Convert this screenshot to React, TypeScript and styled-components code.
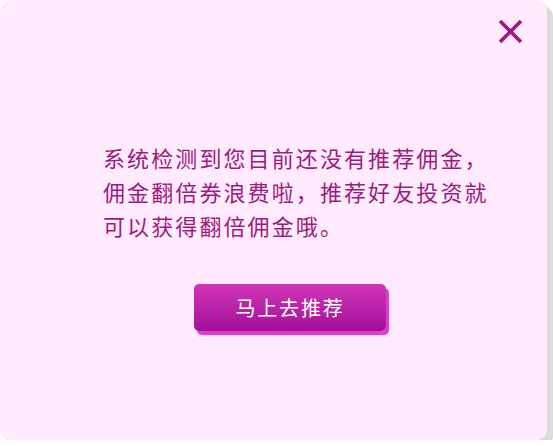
import React from "react";
import styled, { createGlobalStyle } from "styled-components";

const Global = createGlobalStyle`
  html, body { margin: 0; padding: 0; background: #ffffff; }
  body { font-family: "Noto Sans CJK SC", "Noto Sans", sans-serif; }
`;

const Panel = styled.div`
  position: relative;
  box-sizing: border-box;
  width: 547px;
  height: 440px;
  background: #ffebfd;
  border-radius: 10px;
  box-shadow: 6px 6px 0 #dcdcdc;
  padding: 140px 0 0 103px;
  display: flex;
  flex-direction: column;
  align-items: flex-start;
`;

const Close = styled.button`
  position: absolute;
  top: 18px;
  right: 23px;
  width: 27px;
  height: 27px;
  padding: 0;
  border: none;
  background: transparent;
  cursor: pointer;
  display: flex;
  align-items: center;
  justify-content: center;
`;

const Message = styled.p`
  margin: 0;
  font-size: 22px;
  line-height: 34px;
  letter-spacing: 2.1px;
  color: #9d1b7f;
  white-space: pre;
`;

const ActionButton = styled.button`
  margin: 42px 0 0 91px;
  width: 192px;
  height: 47px;
  border: none;
  border-radius: 5px;
  background: linear-gradient(#d136b6, #a2109a);
  box-shadow: 3px 4px 0 #e23bd0;
  color: #ffffff;
  font-family: "Noto Sans CJK SC", sans-serif;
  font-size: 20px;
  letter-spacing: 1.8px;
  padding: 0;
  cursor: pointer;
`;

export default function App() {
  return (
    <>
      <Global />
      <Panel>
        <Close aria-label="关闭">
          <svg width="27" height="27" viewBox="0 0 27 27">
            <path d="M3 3 L24 24 M24 3 L3 24" stroke="#a0177f" strokeWidth="3.6" strokeLinecap="butt" />
          </svg>
        </Close>
        <Message>
          {"系统检测到您目前还没有推荐佣金，"}
          <br />
          {"佣金翻倍券浪费啦，推荐好友投资就"}
          <br />
          {"可以获得翻倍佣金哦。"}
        </Message>
        <ActionButton>马上去推荐</ActionButton>
      </Panel>
    </>
  );
}
